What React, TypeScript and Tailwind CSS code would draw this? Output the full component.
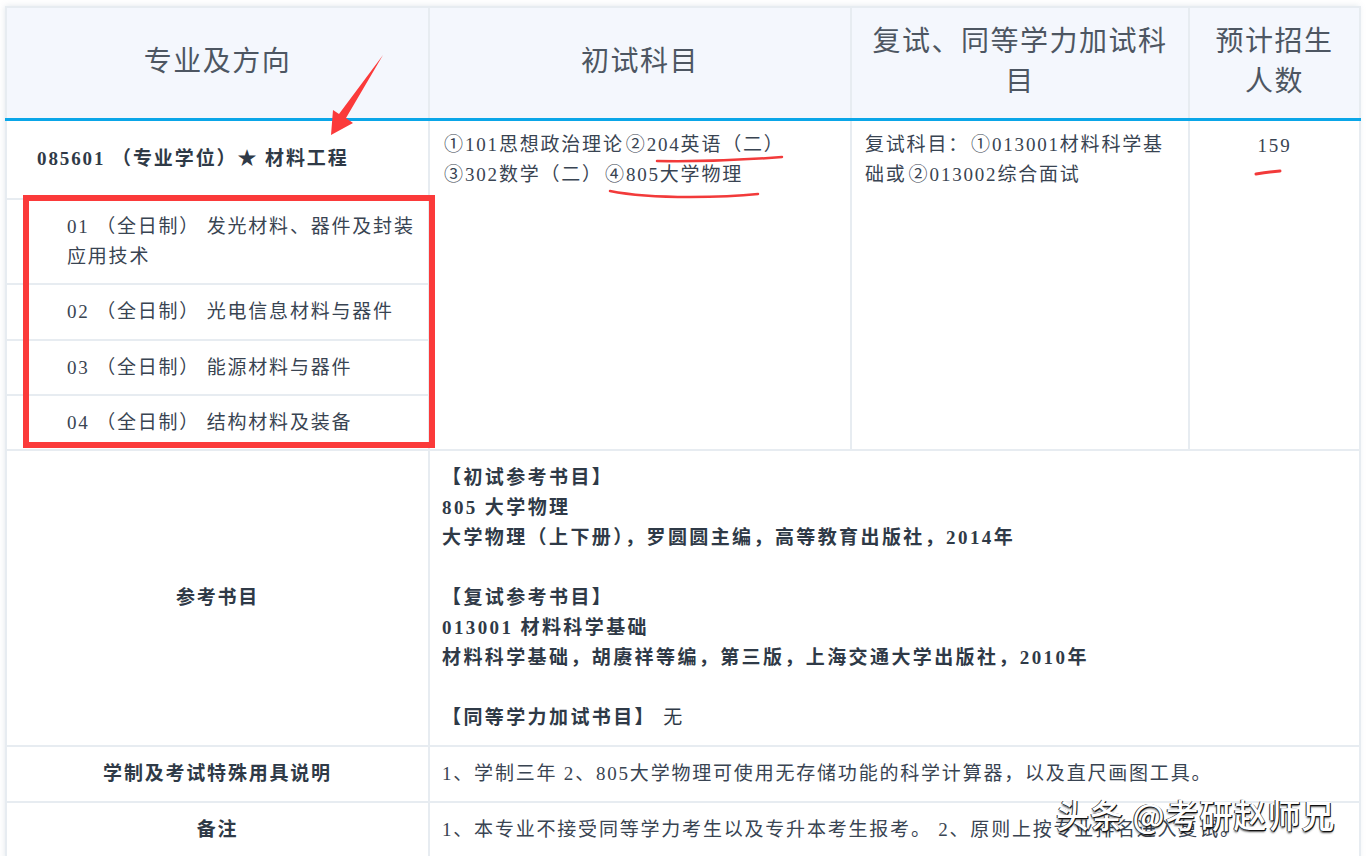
import React from 'react';

const serif = "font-['Liberation_Serif','Noto_Sans_CJK_SC',serif]";

const subDirections = [
  { code: '01', name: '发光材料、器件及封装', rest: '应用技术', h: 'h-[85px]' },
  { code: '02', name: '光电信息材料与器件', h: 'h-[56px]' },
  { code: '03', name: '能源材料与器件', h: 'h-[55px]' },
  { code: '04', name: '结构材料及装备', h: 'h-[55px]' },
];

const cell = 'border-2 border-[#e7ecf1]';

// circled numerals render too narrow in the serif face
const C = ({ n }: { n: string }) => (
  <span className="inline-block w-[23px] text-center font-['Noto_Sans_CJK_SC',sans-serif] leading-none tracking-normal">{n}</span>
);

function Annotations() {
  return (
    <svg className="pointer-events-none absolute left-0 top-0" width="1366" height="856">
      <polygon points="331,135 333,110 339,114 383,55 346,118 353,123" fill="#fb3a3a" />
      <rect x="26" y="198" width="406" height="247" fill="none" stroke="#fb3a3a" strokeWidth="6" />
      <path d="M657 161 Q 720 162 782 157" fill="none" stroke="#f23a3a" strokeWidth="2.5" strokeLinecap="round" />
      <path d="M610 191 Q 640 197 690 197 Q 730 197 758 194" fill="none" stroke="#f23a3a" strokeWidth="2.5" strokeLinecap="round" />
      <path d="M1256 174 Q 1268 172 1280 171" fill="none" stroke="#f23a3a" strokeWidth="3" strokeLinecap="round" />
    </svg>
  );
}

export default function App() {
  return (
    <div className={`relative h-[856px] w-[1366px] overflow-hidden bg-white text-[#394452] ${serif}`}>
      <div className="ml-[5px] mt-[6px] w-[1354px] shadow-[0_0_6px_rgba(140,160,180,0.25)]">
        <table className="w-full table-fixed border-collapse">
          <colgroup>
            <col className="w-[423px]" />
            <col className="w-[422px]" />
            <col className="w-[338px]" />
            <col className="w-[171px]" />
          </colgroup>
          <thead>
            <tr className="h-[112px] bg-[#f4f7fd] text-[28px] font-normal leading-[40px] tracking-[1.5px] text-[#4d5662]">
              <th className={`${cell} border-b-[3px] border-b-[#0aa6e8] pb-[2px] font-normal`}>专业及方向</th>
              <th className={`${cell} border-b-[3px] border-b-[#0aa6e8] pb-[2px] font-normal`}>初试科目</th>
              <th className={`${cell} border-b-[3px] border-b-[#0aa6e8] pb-[2px] font-normal`}>
                复试、同等学力加试科
                <br />目
              </th>
              <th className={`${cell} border-b-[3px] border-b-[#0aa6e8] pb-[2px] font-normal`}>
                预计招生
                <br />
                人数
              </th>
            </tr>
          </thead>
          <tbody className="text-[19px] leading-[30px] tracking-[1.8px]">
            <tr className="h-[80px]">
              <td className={`${cell} pl-[30px] font-bold tracking-[1.9px] text-[#2f3a47]`}>085601 （专业学位）★ 材料工程</td>
              <td rowSpan={5} className={`${cell} whitespace-nowrap px-[12px] pt-[9px] align-top`}>
                <C n="①" />101思想政治理论<C n="②" />204英语（二）
                <br />
                <C n="③" />302数学（二）<C n="④" />805大学物理
              </td>
              <td rowSpan={5} className={`${cell} whitespace-nowrap px-[13px] pt-[9px] align-top`}>
                复试科目：<C n="①" />013001材料科学基
                <br />
                础或<C n="②" />013002综合面试
              </td>
              <td rowSpan={5} className={`${cell} pt-[10px] text-center align-top`}>
                159
              </td>
            </tr>
            {subDirections.map((d) => (
              <tr key={d.code} className={d.h}>
                <td className={`${cell} pl-[60px] pr-[8px]`}>
                  {d.code} （全日制） {d.name}
                  {d.rest && (
                    <>
                      <br />
                      {d.rest}
                    </>
                  )}
                </td>
              </tr>
            ))}
            <tr className="h-[296px]">
              <td className={`${cell} text-center font-bold text-[#2f3a47]`}>参考书目</td>
              <td colSpan={3} className={`${cell} px-[12px] font-bold tracking-[2.4px] text-[#2f3a47]`}>
                <div>【初试参考书目】</div>
                <div>805 大学物理</div>
                <div>大学物理（上下册），罗圆圆主编，高等教育出版社，2014年</div>
                <div className="h-[30px]" />
                <div>【复试参考书目】</div>
                <div>013001 材料科学基础</div>
                <div>材料科学基础，胡赓祥等编，第三版，上海交通大学出版社，2010年</div>
                <div className="h-[30px]" />
                <div>
                  【同等学力加试书目】 <span className="font-normal">无</span>
                </div>
              </td>
            </tr>
            <tr className="h-[56px]">
              <td className={`${cell} text-center font-bold text-[#2f3a47]`}>学制及考试特殊用具说明</td>
              <td colSpan={3} className={`${cell} px-[12px]`}>
                1、学制三年 2、805大学物理可使用无存储功能的科学计算器，以及直尺画图工具。
              </td>
            </tr>
            <tr className="h-[56px]">
              <td className={`${cell} text-center font-bold text-[#2f3a47]`}>备注</td>
              <td colSpan={3} className={`${cell} px-[12px]`}>
                1、本专业不接受同等学力考生以及专升本考生报考。 2、原则上按专业排名进入复试。
              </td>
            </tr>
          </tbody>
        </table>
      </div>

      <Annotations />

      <div className="pointer-events-none absolute left-[1056px] top-[794px] font-['Noto_Sans_CJK_SC',sans-serif] text-[33px] font-medium leading-[40px] tracking-[1px] text-white [text-shadow:1px_1px_0_#111,-1px_0_0_#333,0_2px_2px_rgba(0,0,0,0.7)]">
        头条 @考研赵师兄
      </div>
    </div>
  );
}
